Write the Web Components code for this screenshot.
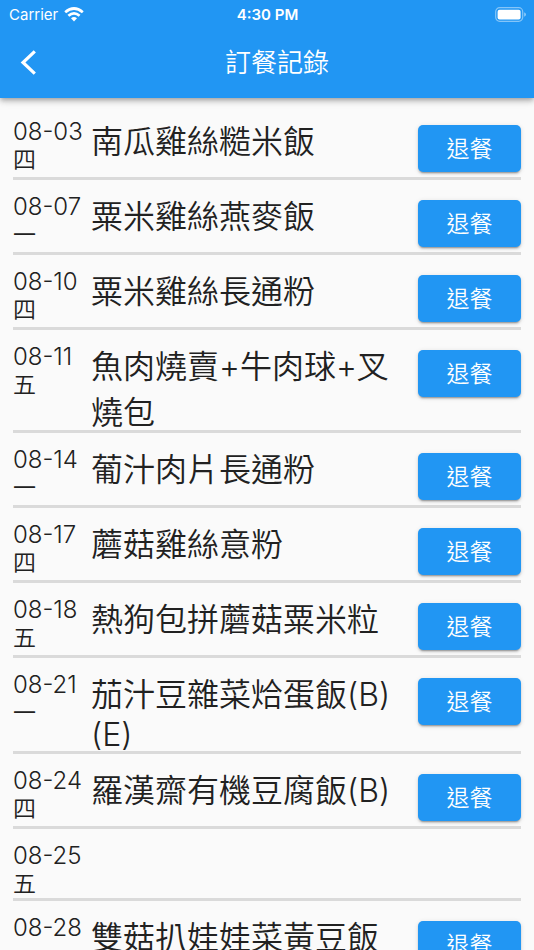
<!DOCTYPE html>
<html lang="zh-Hant">
<head>
<meta charset="utf-8">
<meta name="viewport" content="width=device-width, initial-scale=1">
<title>訂餐記錄</title>
<style>
  html, body {
    margin: 0;
    height: 100%;
  }
  body {
    background: #fafafa;
    color: #212121;
    font-family: Inter, "Noto Sans CJK TC", sans-serif;
    font-weight: 350;
    overflow: hidden;
  }
</style>
</head>
<body>
<order-page></order-page>

<script>
// order-history.js
const orders = [
  { date: '08-03', day: '四', name: '南瓜雞絲糙米飯' },
  { date: '08-07', day: '一', name: '粟米雞絲燕麥飯' },
  { date: '08-10', day: '四', name: '粟米雞絲長通粉' },
  { date: '08-11', day: '五', name: '魚肉燒賣+牛肉球+叉燒包' },
  { date: '08-14', day: '一', name: '葡汁肉片長通粉' },
  { date: '08-17', day: '四', name: '蘑菇雞絲意粉' },
  { date: '08-18', day: '五', name: '熱狗包拼蘑菇粟米粒' },
  { date: '08-21', day: '一', name: '茄汁豆雜菜烚蛋飯(B)(E)' },
  { date: '08-24', day: '四', name: '羅漢齋有機豆腐飯(B)' },
  { date: '08-25', day: '五', name: '' },
  { date: '08-28', day: '一', name: '雙菇扒娃娃菜黃豆飯' }
];

class StatusBar extends HTMLElement {
  constructor() {
    super();
    this.attachShadow({ mode: 'open' });

    this.shadowRoot.innerHTML = `
        <style>
          :host {
            display: grid;
            grid-template-columns: 1fr auto 1fr;
            align-items: center;
            height: 28px;
            padding: 0 8px 0 9px;
            font-size: 15px;
            font-weight: 400;
          }
          .left { display: flex; align-items: center; gap: 6px; }
          .time { font-weight: 600; }
          .battery { justify-self: end; }
          svg { display: block; }
        </style>
        <div class="left">
          <span><slot name="carrier"></slot></span>
          <svg width="20" height="15" viewBox="0 0 20 15" fill="none" stroke="#fff" stroke-width="2.7" aria-hidden="true">
            <path d="M1.2 5.3Q10-2.3 18.8 5.3"/>
            <path d="M4.4 8.8Q10 3.9 15.6 8.8"/>
            <path d="M7 11.2Q10 8.8 13 11.2L10 14.4Z" fill="#fff" stroke="none"/>
          </svg>
        </div>
        <span class="time"><slot name="time"></slot></span>
        <svg class="battery" width="31" height="15" viewBox="0 0 31 15" aria-hidden="true">
          <rect x=".7" y=".7" width="27" height="13.6" rx="4" fill="none" stroke="#fff" stroke-opacity=".45" stroke-width="1.2"/>
          <rect x="2.6" y="2.8" width="23" height="9.6" rx="2" fill="#fff"/>
          <path d="M29.2 5.2Q31 6 31 7.5T29.2 9.8Z" fill="#fff" fill-opacity=".5"/>
        </svg>
      `;
  }
}

class AppBar extends HTMLElement {
  constructor() {
    super();
    this.attachShadow({ mode: 'open' });

    this.shadowRoot.innerHTML = `
        <style>
          :host {
            display: block;
            position: relative;
            background: #2196f3;
            color: #fff;
            box-shadow: 0 2px 4px -1px rgba(0, 0, 0, .2), 0 4px 5px rgba(0, 0, 0, .14), 0 1px 10px rgba(0, 0, 0, .12);
          }
          .toolbar {
            display: grid;
            grid-template-columns: 56px 1fr;
            align-items: center;
            height: 70px;
            padding-right: 36px;
          }
          button {
            display: flex;
            align-items: center;
            justify-content: center;
            height: 56px;
            padding: 0;
            border: 0;
            background: none;
            color: inherit;
          }
          h1 {
            margin: 0;
            text-align: center;
            font-size: 26px;
            font-weight: inherit;
            line-height: 36px;
          }
        </style>
        <slot name="status"></slot>
        <div class="toolbar">
          <button type="button" aria-label="返回">
            <svg width="16" height="26" viewBox="0 0 16 26" fill="none" stroke="currentColor" stroke-width="3.2" aria-hidden="true">
              <path d="M14.8 1.3L3 12.5L14.8 23.7"/>
            </svg>
          </button>
          <h1><slot></slot></h1>
        </div>
      `;
  }
}

class RefundButton extends HTMLElement {
  constructor() {
    super();
    this.attachShadow({ mode: 'open' });

    this.shadowRoot.innerHTML = `
        <style>
          :host { display: block; }
          button {
            display: block;
            width: 100%;
            height: 47px;
            padding: 1px 0 0;
            border: 0;
            border-radius: 5px;
            background: #2196f3;
            color: #fff;
            font: inherit;
            font-size: 23px;
            line-height: 46px;
            box-shadow: 0 3px 1px -2px rgba(0, 0, 0, .2), 0 2px 2px rgba(0, 0, 0, .14), 0 1px 5px rgba(0, 0, 0, .12);
          }
        </style>
        <button type="button"><slot></slot></button>
      `;
  }
}

class OrderItem extends HTMLElement {
  constructor() {
    super();
    this.attachShadow({ mode: 'open' });

    this.shadowRoot.innerHTML = `
        <style>
          :host {
            display: grid;
            grid-template-columns: 78px 1fr 103px;
            align-items: start;
            padding-top: 11px;
            border-bottom: 3px solid #dadada;
          }
          .when { padding-top: 1px; line-height: 29px; margin-bottom: -1px; }
          .when span { display: block; }
          .date { font-size: 24px; font-weight: 300; }
          .day { font-size: 23px; }
          .name { font-size: 32px; margin: 0 8px -3px 0; }
          refund-button { margin: 9px 0 5px; }
        </style>
        <div class="when"><span class="date"></span><span class="day"></span></div>
        <div class="name"></div>
      `;
  }

  connectedCallback() {
    const root = this.shadowRoot;
    const name = this.getAttribute('name');

    root.querySelector('.date').textContent = this.getAttribute('date');
    root.querySelector('.day').textContent = this.getAttribute('day');
    root.querySelector('.name').textContent = name;

    // Days without a meal have nothing to refund
    if (name && !root.querySelector('refund-button')) {
      const button = document.createElement('refund-button');
      button.textContent = '退餐';
      root.appendChild(button);
    }
  }
}

class OrderPage extends HTMLElement {
  constructor() {
    super();
    this.attachShadow({ mode: 'open' });

    this.shadowRoot.innerHTML = `
        <style>
          :host {
            display: flex;
            flex-direction: column;
            height: 100%;
          }
          main {
            flex: 1;
            min-height: 0;
            overflow-y: auto;
            scrollbar-width: none;
            padding: 7px 13px 0;
          }
        </style>
        <app-bar>
          <status-bar slot="status">
            <span slot="carrier">Carrier</span>
            <span slot="time">4:30 PM</span>
          </status-bar>
          訂餐記錄
        </app-bar>
        <main></main>
      `;
  }

  connectedCallback() {
    const main = this.shadowRoot.querySelector('main');
    orders.forEach(order => {
      const item = document.createElement('order-item');
      item.setAttribute('date', order.date);
      item.setAttribute('day', order.day);
      item.setAttribute('name', order.name);
      main.appendChild(item);
    });
  }
}

customElements.define('status-bar', StatusBar);
customElements.define('app-bar', AppBar);
customElements.define('refund-button', RefundButton);
customElements.define('order-item', OrderItem);
customElements.define('order-page', OrderPage);
</script>
</body>
</html>
